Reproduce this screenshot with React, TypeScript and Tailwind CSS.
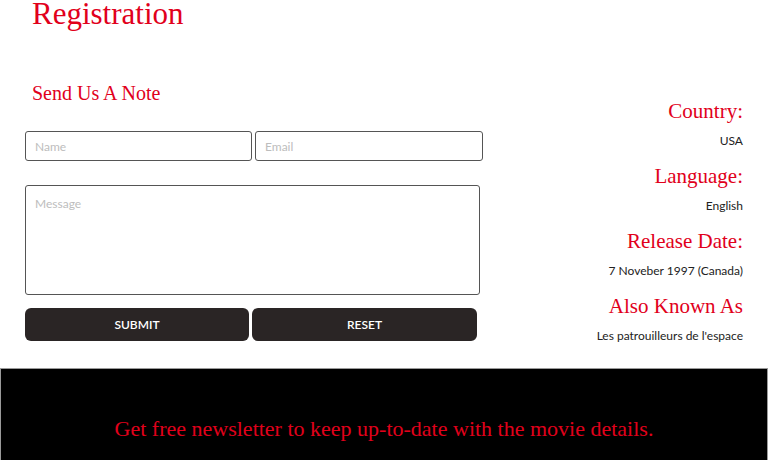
import React from 'react';

const SERIF = "font-['Liberation_Serif','Times_New_Roman',serif]";
const SANS = "font-['Lato','Liberation_Sans',sans-serif]";
const RED = 'text-[#e1001b]';

const FIELD =
  'border border-[#555] rounded-[3px] bg-white px-[9px] text-[12px] text-[#222] placeholder-[#bdbdbd] outline-none ' + SANS;

const details = [
  { label: 'Country:', value: 'USA' },
  { label: 'Language:', value: 'English' },
  { label: 'Release Date:', value: '7 Noveber 1997 (Canada)' },
  { label: 'Also Known As', value: "Les patrouilleurs de l'espace" },
];

export default function App() {
  return (
    <div className="w-[768px] h-[460px] overflow-hidden bg-white flex flex-col">
      <div className="flex px-[25px] h-[368px]">
        {/* form */}
        <div className="w-[458px]">
          <h1 className={`${SERIF} ${RED} text-[31px] leading-[31px] -mt-[2px] pl-[7px]`}>Registration</h1>
          <h2 className={`${SERIF} ${RED} text-[20px] leading-[20px] mt-[54px] pl-[7px]`}>Send Us A Note</h2>

          <div className="flex gap-[3px] mt-[28px]">
            <input placeholder="Name" className={`${FIELD} w-[227px] h-[30px]`} />
            <input placeholder="Email" className={`${FIELD} w-[228px] h-[30px]`} />
          </div>

          <textarea
            placeholder="Message"
            className={`${FIELD} block w-[455px] h-[110px] mt-[24px] pt-[9px] resize-none`}
          />

          <div className="flex gap-[3px] mt-[13px]">
            <button className={`${SANS} w-[224px] h-[33px] rounded-[6px] bg-[#2a2525] text-white text-[12px] font-semibold`}>
              SUBMIT
            </button>
            <button className={`${SANS} w-[225px] h-[33px] rounded-[6px] bg-[#2a2525] text-white text-[12px] font-semibold`}>
              RESET
            </button>
          </div>
        </div>

        {/* movie details */}
        <div className="flex-1 text-right pt-[99px]">
          {details.map(d => (
            <div key={d.label} className="h-[65px]">
              <div className={`${SERIF} ${RED} text-[21px] leading-[24px]`}>{d.label}</div>
              <div className={`${SANS} text-[12px] leading-[16px] text-[#222] mt-[10px]`}>{d.value}</div>
            </div>
          ))}
        </div>
      </div>

      {/* newsletter */}
      <div className="flex-1 bg-black border border-[#9a9a9a] border-b-0 pt-[48px] text-center">
        <p className={`${SERIF} ${RED} text-[22px] leading-[24px]`}>
          Get free newsletter to keep up-to-date with the movie details.
        </p>
      </div>
    </div>
  );
}
